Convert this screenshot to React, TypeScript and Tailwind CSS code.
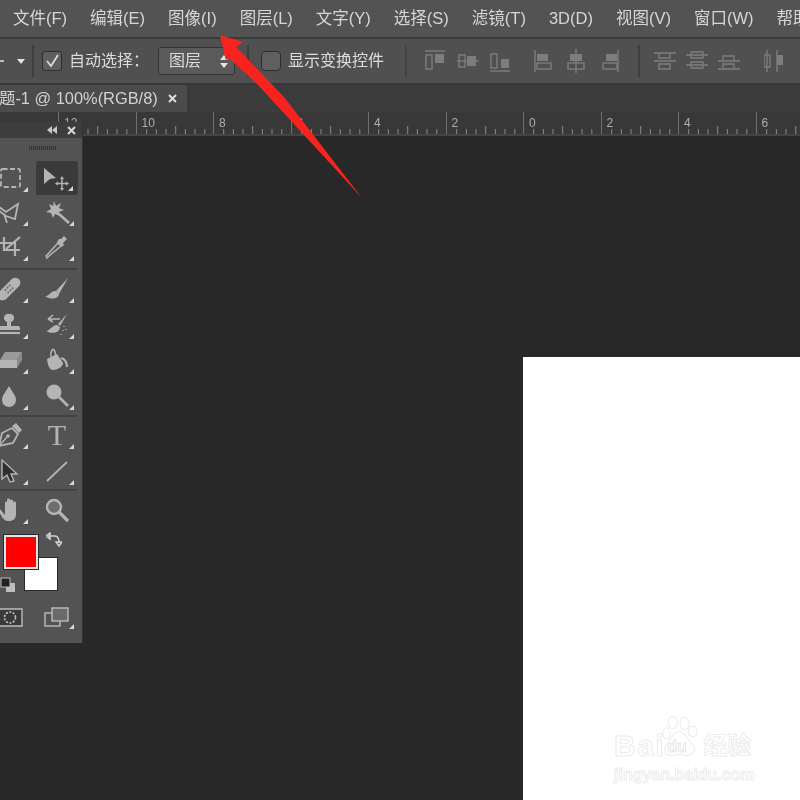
import React from "react";

const FONT = "font-['Liberation_Sans','Noto_Sans_CJK_SC',sans-serif]";

const menus = ["文件(F)", "编辑(E)", "图像(I)", "图层(L)", "文字(Y)", "选择(S)", "滤镜(T)", "3D(D)", "视图(V)", "窗口(W)", "帮助(H)"];

function Align({ d, w = 22 }: { d: string; w?: number }) {
  return (
    <svg width={w} height="24" viewBox={`0 0 ${w} 24`} className="shrink-0" fill="none" stroke="#7d7d7d" strokeWidth="1.4">
      <path d={d} />
    </svg>
  );
}

function AlignFilled({ line, hollow, filled }: { line: string; hollow: number[]; filled: number[] }) {
  return (
    <svg width="22" height="24" viewBox="0 0 22 24" className="shrink-0">
      <path d={line} stroke="#7d7d7d" strokeWidth="1.4" fill="none" />
      <rect x={hollow[0]} y={hollow[1]} width={hollow[2]} height={hollow[3]} fill="none" stroke="#7d7d7d" strokeWidth="1.4" />
      <rect x={filled[0]} y={filled[1]} width={filled[2]} height={filled[3]} fill="#7d7d7d" />
    </svg>
  );
}

function RulerSegment({ label }: { label: string }) {
  const ticks = [9.7, 19.4, 29, 38.7, 48.4, 58, 67.8];
  return (
    <div className="relative h-full w-[77.5px] shrink-0 border-l border-[#6f6f6f] pl-[5px] pt-[3px] text-[12px] leading-[16px] text-[#a8b0b8]">
      {label}
      <svg width="77" height="8" viewBox="0 0 77 8" className="absolute bottom-0 left-0" stroke="#8a8a8a" strokeWidth="1">
        {ticks.map((x, i) => (
          <line key={i} x1={x} x2={x} y1={i === 3 ? 0 : 3} y2="8" />
        ))}
      </svg>
    </div>
  );
}

function Tool({ children, active, corner = true }: { children: React.ReactNode; active?: boolean; corner?: boolean }) {
  return (
    <div className={`relative flex h-[34px] w-[42px] items-center justify-center rounded-[2px] ${active ? "border border-[#3c3c3c] bg-[#3a3a3a]" : ""}`}>
      {children}
      {corner && (
        <svg width="5" height="5" viewBox="0 0 5 5" className="absolute bottom-[3px] right-[4px]">
          <path d="M5 0V5H0Z" fill="#d8d8d8" />
        </svg>
      )}
    </div>
  );
}

const C = "#b4b4b4";
const ic = { width: 26, height: 26, viewBox: "0 0 26 26" };

const icons: Record<string, React.ReactNode> = {
  marquee: <svg {...ic}><rect x="3" y="4" width="19" height="18" rx="1.5" fill="none" stroke={C} strokeWidth="1.8" strokeDasharray="5 2.5" /></svg>,
  move: (
    <svg {...ic} width="32" height="26" viewBox="0 0 32 26">
      <path d="M3 3L15 13L9 14L3 19Z" fill={C} />
      <path d="M21 13V24M15.500 18.500H26.500" stroke={C} strokeWidth="1.5" />
      <path d="M21 11L23 14H19ZM21 26L19 23H23ZM14 18.500L17 16.500V20.500ZM28 18.500L25 20.500V16.500Z" fill={C} />
    </svg>
  ),
  lasso: <svg {...ic}><path d="M1 8L8 13L20 5L17 20L8 17L1 12M6 15L9 24" fill="none" stroke={C} strokeWidth="1.8" /></svg>,
  wand: (
    <svg {...ic}>
      <path d="M10 2L12 7L17 4L15 9L20 11L15 13L16 17L11 15L9 19L7 14L2 13L7 10L5 5L9 7Z" fill={C} />
      <path d="M15 15L25 24" stroke={C} strokeWidth="2.6" />
    </svg>
  ),
  crop: <svg {...ic}><path d="M0 9H17V22M6 3V16H22M22 3L8 15" fill="none" stroke={C} strokeWidth="2.2" /></svg>,
  dropper: (
    <svg {...ic}>
      <path d="M5 22L3 24L2 22L4 20L14 9L17 12Z" fill="none" stroke={C} strokeWidth="1.6" />
      <path d="M13 8L18 13L20 11L19 9L23 5L20 2L17 5L15 5Z" fill={C} />
    </svg>
  ),
  bandage: (
    <svg {...ic}>
      <g transform="rotate(-45 11 13)">
        <rect x="-3" y="8" width="28" height="10" rx="5" fill={C} />
        <circle cx="8" cy="11" r="1" fill="#666" /><circle cx="11" cy="11" r="1" fill="#666" /><circle cx="14" cy="11" r="1" fill="#666" />
        <circle cx="8" cy="15" r="1" fill="#666" /><circle cx="11" cy="15" r="1" fill="#666" /><circle cx="14" cy="15" r="1" fill="#666" />
      </g>
    </svg>
  ),
  brush: (
    <svg {...ic}>
      <path d="M24 2L12 15L15 18Z" fill={C} />
      <path d="M1 20C6 20 7 14 12 15L15 18C15 22 8 25 1 20Z" fill={C} />
    </svg>
  ),
  stamp: (
    <svg {...ic}>
      <path d="M11 2A4 4 0 0 1 13 10V14H20C22 14 22 16 22 18H0C0 16 0 14 3 14H9V10A4 4 0 0 1 11 2Z" fill={C} />
      <path d="M0 21H22" stroke={C} strokeWidth="2.2" />
    </svg>
  ),
  historyBrush: (
    <svg {...ic}>
      <path d="M23 2L14 12L16 14Z" fill={C} />
      <path d="M2 19C6 19 8 13 13 13L16 15C16 20 9 23 2 19Z" fill={C} />
      <path d="M4 7H16M4 7L9 3M4 7L9 10" stroke={C} strokeWidth="1.6" fill="none" />
      <path d="M20 14V15M19 18V19M22 17V18M17 22V23" stroke={C} strokeWidth="1.4" />
    </svg>
  ),
  eraser: (
    <svg {...ic}>
      <path d="M7 5H24L19 13H2Z" fill="#9a9a9a" />
      <path d="M2 13H19V21H2Z" fill={C} />
      <path d="M19 13L24 5V13L19 21Z" fill="#8a8a8a" />
    </svg>
  ),
  bucket: (
    <svg {...ic}>
      <path d="M3 12L13 7L19 16C19 20 13 23 9 23C6 23 4 20 3 12Z" fill={C} />
      <path d="M7 10C6 4 9 1 10 3C12 5 11 8 12 9" fill="none" stroke={C} strokeWidth="1.6" />
      <path d="M17 11C21 12 23 15 23 20" fill="none" stroke={C} strokeWidth="2.2" />
    </svg>
  ),
  drop: <svg {...ic}><path d="M11 3C14 9 18 12 18 17A7 7 0 0 1 4 17C4 12 8 9 11 3Z" fill={C} /></svg>,
  dodge: (
    <svg {...ic}>
      <circle cx="10" cy="9" r="7.500" fill={C} />
      <path d="M15 14L24 23" stroke={C} strokeWidth="2.6" />
    </svg>
  ),
  pen: (
    <svg {...ic}>
      <path d="M1 24L4 11L14 6L20 12L15 21Z" fill="none" stroke={C} strokeWidth="1.8" />
      <path d="M14 4L18 1L24 8L21 11Z" fill={C} />
      <path d="M1 24L9 15" stroke={C} strokeWidth="1.4" />
      <circle cx="10" cy="14" r="1.800" fill={C} />
    </svg>
  ),
  select: <svg {...ic}><path d="M4 2V21L9 17L12 24L16 23L13 16H19Z" fill="#2f2f2f" stroke={C} strokeWidth="1.4" /></svg>,
  line: <svg {...ic}><path d="M3 23L23 4" stroke={C} strokeWidth="1.8" /></svg>,
  zoom: (
    <svg {...ic}>
      <circle cx="10" cy="10" r="7" fill="#6e6e6e" stroke={C} strokeWidth="2.4" />
      <path d="M15 15L24 24" stroke={C} strokeWidth="3.200" />
    </svg>
  ),
  hand: (
    <svg {...ic}>
      <path d="M2 12L7 18V6C7 4 9 4 9 6V12V3C9 1 12 1 12 3V12V4C12 2 15 2 15 4V12V6C15 4 18 4 18 6V17C18 22 15 24 11 24C7 24 5 22 3 18L0 14C0 12 1 11 2 12Z" fill={C} />
    </svg>
  ),
};

function Sep({ className }: { className: string }) {
  return <div className={`h-[2px] w-[77px] bg-[#424242] ${className}`} />;
}

function ToolBox() {
  const row = "flex w-[90px] -ml-[10px] justify-between pr-[2px]";
  return (
    <div className="absolute left-0 top-[122px] flex h-[521px] w-[83px] flex-col overflow-hidden border-r border-[#333] bg-[#535353]">
      <div className="flex h-[16px] shrink-0 items-center justify-end gap-[10px] bg-[#3d3d3d] pr-[6px]">
        <svg width="10" height="8" viewBox="0 0 10 8" fill="#c8c8c8"><path d="M5 0V8L0 4ZM10 0V8L5 4Z" /></svg>
        <svg width="9" height="9" viewBox="0 0 9 9" stroke="#d8d8d8" strokeWidth="2"><path d="M1 1L8 8M8 1L1 8" /></svg>
      </div>
      <div className="flex h-[12px] shrink-0 items-end justify-center pl-[3px]">
        <div className="h-[4px] w-[27px] bg-[repeating-linear-gradient(90deg,#333_0,#333_1px,transparent_1px,transparent_2px)]" />
      </div>
      <div className="mt-[11px] flex shrink-0 flex-col">
        <div className={row}><Tool>{icons.marquee}</Tool><Tool active>{icons.move}</Tool></div>
        <div className={row}><Tool>{icons.lasso}</Tool><Tool>{icons.wand}</Tool></div>
        <div className={`${row} mt-[1px]`}><Tool>{icons.crop}</Tool><Tool>{icons.dropper}</Tool></div>
        <Sep className="mt-[4px]" />
        <div className={`${row} mt-[2px]`}><Tool>{icons.bandage}</Tool><Tool>{icons.brush}</Tool></div>
        <div className={`${row} mt-[2px]`}><Tool>{icons.stamp}</Tool><Tool>{icons.historyBrush}</Tool></div>
        <div className={`${row} mt-[1px]`}><Tool>{icons.eraser}</Tool><Tool>{icons.bucket}</Tool></div>
        <div className={`${row} mt-[2px]`}><Tool>{icons.drop}</Tool><Tool>{icons.dodge}</Tool></div>
        <Sep className="mt-[2px]" />
        <div className={`${row} mt-[1px]`}><Tool>{icons.pen}</Tool><Tool><span className="font-['Liberation_Serif',serif] text-[30px] leading-none text-[#b4b4b4]">T</span></Tool></div>
        <div className={`${row} mt-[2px]`}><Tool>{icons.select}</Tool><Tool>{icons.line}</Tool></div>
        <Sep className="mt-[1px]" />
        <div className={`${row} mt-[2px]`}><Tool>{icons.hand}</Tool><Tool corner={false}>{icons.zoom}</Tool></div>
      </div>
      <div className="relative mt-[8px] h-[72px] flex-none">
        <div className="absolute left-[4px] top-[0px] z-10 h-[34px] w-[34px] border-2 border-[#e4e4e4] bg-[#ff0000] outline outline-1 outline-[#2a2a2a]" />
        <div className="absolute left-[24px] top-[22px] h-[34px] w-[34px] border border-[#2a2a2a] bg-white" />
        <svg width="16" height="16" viewBox="0 0 16 16" className="absolute left-[46px] top-[-3px]" fill="none" stroke="#d0d0d0" strokeWidth="1.5">
          <path d="M2 4H9C12 4 13 7 13 11M0 4L4 1V7ZM13 14L10 10H16Z" />
        </svg>
        <svg width="16" height="16" viewBox="0 0 16 16" className="absolute left-[0px] top-[42px]">
          <rect x="6" y="6" width="9" height="9" fill="#bdbdbd" />
          <rect x="1" y="1" width="9" height="9" fill="#222" stroke="#bdbdbd" />
        </svg>
      </div>
      <div className="-mt-[0px] flex shrink-0 items-center justify-between pr-[13px]">
        <svg width="23" height="20" viewBox="0 0 23 20">
          <path d="M-2 1H22V18H-2" fill="#3a3a3a" stroke="#bdbdbd" strokeWidth="1.4" />
          <circle cx="10" cy="9.500" r="5.500" fill="none" stroke="#c8c8c8" strokeWidth="1.6" strokeDasharray="2 1.500" />
        </svg>
        <div className="relative h-[22px] w-[25px]">
          <svg width="25" height="20" viewBox="0 0 25 20" fill="none" stroke="#bdbdbd" strokeWidth="1.4">
            <rect x="1" y="6" width="15" height="13" />
            <rect x="8" y="1" width="16" height="13" fill="#6a6a6a" />
          </svg>
          <svg width="5" height="5" viewBox="0 0 5 5" className="absolute bottom-0 -right-[5px]"><path d="M5 0V5H0Z" fill="#d8d8d8" /></svg>
        </div>
      </div>
    </div>
  );
}

export default function App() {
  return (
    <div className={`relative flex h-[800px] w-[800px] flex-col overflow-hidden bg-[#282828] blur-[0.4px] ${FONT}`}>
      {/* menu bar */}
      <div className="flex h-[39px] shrink-0 items-center gap-[23px] whitespace-nowrap border-b-2 border-[#3a3a3a] bg-[#535353] pl-[13px] text-[16.5px] text-[#d6d6d6]">
        {menus.map((m) => (
          <span key={m} className="shrink-0">{m}</span>
        ))}
      </div>

      {/* options bar */}
      <div className="flex h-[46px] shrink-0 items-center whitespace-nowrap border-b-2 border-[#383838] bg-[#505050] text-[16px] text-[#dcdcdc]">
        <svg width="8" height="10" viewBox="0 0 8 10" className="ml-0" fill="#bdbdbd"><path d="M0 4H4V6H0Z" /></svg>
        <svg width="8" height="5" viewBox="0 0 8 5" className="ml-[9px]" fill="#e2e2e2"><path d="M0 0H8L4 5Z" /></svg>
        <div className="ml-[7px] h-[32px] w-[2px] bg-[#3d3d3d]" />
        <div className="ml-[8px] flex h-[20px] w-[20px] items-center justify-center rounded-[3px] border border-[#2e2e2e] bg-[#5f5f5f]">
          <svg width="16" height="15" viewBox="0 0 16 15" fill="none" stroke="#dcdcdc" strokeWidth="1.800"><path d="M3 7L7 12L14 1" /></svg>
        </div>
        <span className="ml-[7px]">自动选择：</span>
        <div className="ml-[9px] flex h-[28px] w-[77px] items-center justify-between rounded-[3px] border border-[#343434] bg-[#5a5a5a] pl-[10px] pr-[5px]">
          <span>图层</span>
          <svg width="10" height="15" viewBox="0 0 10 15" fill="#e4e4e4"><path d="M5 1L9 6H1ZM5 14L1 9H9Z" /></svg>
        </div>
        <div className="ml-[12px] h-[32px] w-[2px] bg-[#3d3d3d]" />
        <div className="ml-[12px] h-[20px] w-[20px] rounded-[4px] border border-[#2e2e2e] bg-[#5f5f5f]" />
        <span className="ml-[7px]">显示变换控件</span>
        <div className="ml-[21px] h-[32px] w-[2px] bg-[#444]" />
        <div className="ml-[17px] flex items-center gap-[11px]">
          <AlignFilled line="M1 2H21" hollow={[2, 6, 6, 14]} filled={[11, 5, 9, 9]} />
          <AlignFilled line="M0 12H22" hollow={[2, 6, 6, 12]} filled={[10, 7, 9, 10]} />
          <AlignFilled line="M0 22H20" hollow={[1, 5, 6, 14]} filled={[11, 10, 8, 9]} />
        </div>
        <div className="ml-[21px] flex items-center gap-[11px]">
          <AlignFilled line="M2 1V23" hollow={[4, 14, 14, 6]} filled={[4, 5, 11, 7]} />
          <AlignFilled line="M10 0V24" hollow={[2, 14, 16, 6]} filled={[4, 5, 12, 7]} />
          <AlignFilled line="M19 1V23" hollow={[4, 14, 14, 6]} filled={[7, 5, 11, 7]} />
        </div>
        <div className="ml-[17px] h-[32px] w-[2px] bg-[#3d3d3d]" />
        <div className="ml-[14px] flex items-center gap-[10px]">
          <Align d="M0 4H22M0 12H22M5 4V9H16V4M5 15H16V20H5Z" />
          <Align d="M0 6H22M0 16H22M5 3H17V9H5ZM5 13H17V19H5Z" />
          <Align d="M0 20H22M0 12H22M5 12V7H16V12M5 15H16V20H5Z" />
        </div>
        <div className="ml-[24px] shrink-0">
          <AlignFilled line="M3 1V23M13 1V23" hollow={[0, 6, 6, 12]} filled={[13, 6, 6, 10]} />
        </div>
      </div>

      {/* tab bar */}
      <div className="flex h-[27px] shrink-0 bg-[#3b3b3b]">
        <div className="flex h-full w-[187px] items-center overflow-hidden bg-[#4b4b4b] text-[#cfd3d6]">
          <span className="-ml-[1px] whitespace-nowrap text-[16.4px]">题-1 @ 100%(RGB/8)</span>
          <svg width="9" height="9" viewBox="0 0 9 9" className="ml-[10px] shrink-0" stroke="#e0e0e0" strokeWidth="1.800"><path d="M1 1L8 8M8 1L1 8" /></svg>
        </div>
      </div>

      {/* ruler */}
      <div className="flex h-[24px] shrink-0 overflow-hidden border-b-2 border-[#444] bg-[#383838] pl-[58px]">
        {["12", "10", "8", "6", "4", "2", "0", "2", "4", "6"].map((l, i) => (
          <RulerSegment key={i} label={l} />
        ))}
      </div>

      {/* canvas */}
      <div className="flex flex-1 bg-[#282828] pl-[523px] pt-[221px]">
        <div className="flex-1 bg-white" />
      </div>

      <ToolBox />

      {/* watermark */}
      <div className="absolute left-[614px] top-[713px] flex w-[150px] flex-col text-white">
        <div className="flex items-end">
          <span className="font-['Liberation_Sans',sans-serif] text-[30px] font-bold leading-[30px] tracking-[1.5px] text-white [-webkit-text-stroke:1px_#ececec]">Bai</span>
          <div className="relative -ml-[5px] h-[48px] w-[40px]">
            <svg width="40" height="48" viewBox="0 0 44 50" fill="white" stroke="#ececec" strokeWidth="1.200">
              <ellipse cx="14" cy="9" rx="5" ry="7" />
              <ellipse cx="27" cy="10" rx="5" ry="7" />
              <ellipse cx="7" cy="21" rx="4" ry="6" />
              <ellipse cx="36" cy="19" rx="5" ry="6" />
              <path d="M21 19C28 19 32 30 37 35C41 41 34 47 27 45C23 44 19 44 15 45C8 47 3 41 6 35C10 30 14 19 21 19Z" />
            </svg>
            <span className="absolute left-[7px] top-[25px] text-[16px] font-bold leading-[18px] text-white [-webkit-text-stroke:1px_#e6e6e6]">du</span>
          </div>
          <span className="ml-[3px] text-[24px] font-bold leading-[30px] text-white [-webkit-text-stroke:1px_#ececec]">经验</span>
        </div>
        <span className="mt-[5px] font-['Liberation_Sans',sans-serif] text-[16px] font-bold leading-[18px] text-white [-webkit-text-stroke:1px_#ececec]">jingyan.baidu.com</span>
      </div>

      {/* annotation arrow */}
      <svg width="800" height="800" viewBox="0 0 800 800" className="pointer-events-none absolute left-0 top-0">
        <path d="M220 35L243 42L236 47L284 97L362 198L258 85L228 57L226 61Z" fill="#f8231f" />
      </svg>
    </div>
  );
}
